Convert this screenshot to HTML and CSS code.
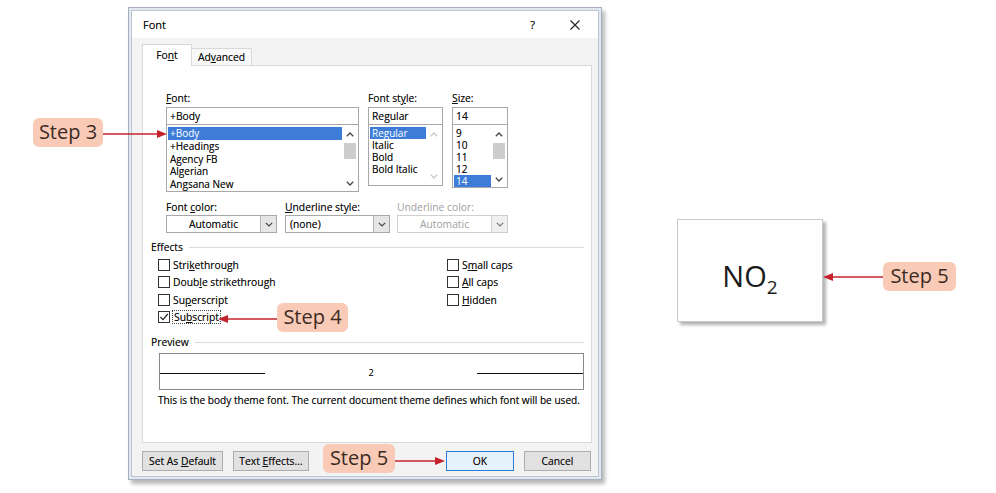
FILE: index.html
```html
<!DOCTYPE html>
<html>
<head>
<meta charset="utf-8">
<title>Font</title>
<link rel="stylesheet" href="styles.css">
</head>
<body>
<div class="stage">
  <div class="dialog">
    <div class="dinner">
      <div class="titlebar">
        <span class="title">Font</span>
        <span class="help">?</span>
        <svg class="close" width="10" height="10" viewBox="0 0 10 10"><path d="M0.5 0.5 L9.5 9.5 M9.5 0.5 L0.5 9.5" stroke="#222" stroke-width="1.1" fill="none"/></svg>
      </div>
      <div class="dbody">
        <div class="tabs">
          <div class="tab active">Fo<u>n</u>t</div>
          <div class="tab">Ad<u>v</u>anced</div>
        </div>
        <div class="panel">
          <div class="fontrow">
            <div class="col col-font">
              <div class="lbl"><u>F</u>ont:</div>
              <div class="input">+Body</div>
              <div class="list list-font">
                <div class="items">
                  <div class="item sel">+Body</div>
                  <div class="item">+Headings</div>
                  <div class="item">Agency FB</div>
                  <div class="item">Algerian</div>
                  <div class="item">Angsana New</div>
                </div>
                <div class="sbar">
                  <div class="sb-btn up"><svg width="8" height="5" viewBox="0 0 8 5"><polyline points="0.8,4.2 4,1 7.2,4.2" fill="none" stroke="#444" stroke-width="1.3"/></svg></div>
                  <div class="thumb"></div>
                  <div class="sb-space"></div>
                  <div class="sb-btn down"><svg width="8" height="5" viewBox="0 0 8 5"><polyline points="0.8,0.8 4,4 7.2,0.8" fill="none" stroke="#444" stroke-width="1.3"/></svg></div>
                </div>
              </div>
            </div>
            <div class="col col-style">
              <div class="lbl">Font st<u>y</u>le:</div>
              <div class="input">Regular</div>
              <div class="list list-style">
                <div class="items">
                  <div class="item sel">Regular</div>
                  <div class="item">Italic</div>
                  <div class="item">Bold</div>
                  <div class="item">Bold Italic</div>
                </div>
                <div class="sbar disabled">
                  <div class="sb-btn up"><svg width="8" height="5" viewBox="0 0 8 5"><polyline points="0.8,4.2 4,1 7.2,4.2" fill="none" stroke="#c8c8c8" stroke-width="1.3"/></svg></div>
                  <div class="sb-space"></div>
                  <div class="sb-btn down"><svg width="8" height="5" viewBox="0 0 8 5"><polyline points="0.8,0.8 4,4 7.2,0.8" fill="none" stroke="#c8c8c8" stroke-width="1.3"/></svg></div>
                </div>
              </div>
            </div>
            <div class="col col-size">
              <div class="lbl"><u>S</u>ize:</div>
              <div class="input">14</div>
              <div class="list list-size">
                <div class="items">
                  <div class="item">9</div>
                  <div class="item">10</div>
                  <div class="item">11</div>
                  <div class="item">12</div>
                  <div class="item sel">14</div>
                </div>
                <div class="sbar">
                  <div class="sb-btn up"><svg width="8" height="5" viewBox="0 0 8 5"><polyline points="0.8,4.2 4,1 7.2,4.2" fill="none" stroke="#444" stroke-width="1.3"/></svg></div>
                  <div class="thumb"></div>
                  <div class="sb-space"></div>
                  <div class="sb-btn down"><svg width="8" height="5" viewBox="0 0 8 5"><polyline points="0.8,0.8 4,4 7.2,0.8" fill="none" stroke="#444" stroke-width="1.3"/></svg></div>
                </div>
              </div>
            </div>
          </div>

          <div class="colorrow">
            <div class="ccol c1">
              <div class="lbl">Font <u>c</u>olor:</div>
              <div class="select"><span class="sval center">Automatic</span><span class="sbtn"><svg width="8" height="5" viewBox="0 0 8 5"><polyline points="0.8,0.8 4,4 7.2,0.8" fill="none" stroke="#444" stroke-width="1.2"/></svg></span></div>
            </div>
            <div class="ccol c2">
              <div class="lbl"><u>U</u>nderline style:</div>
              <div class="select"><span class="sval">(none)</span><span class="sbtn"><svg width="8" height="5" viewBox="0 0 8 5"><polyline points="0.8,0.8 4,4 7.2,0.8" fill="none" stroke="#444" stroke-width="1.2"/></svg></span></div>
            </div>
            <div class="ccol c3 disabled">
              <div class="lbl">Underline color:</div>
              <div class="select"><span class="sval center">Automatic</span><span class="sbtn"><svg width="8" height="5" viewBox="0 0 8 5"><polyline points="0.8,0.8 4,4 7.2,0.8" fill="none" stroke="#777" stroke-width="1.2"/></svg></span></div>
            </div>
          </div>

          <div class="group-head"><span>Effects</span><span class="rule"></span></div>
          <div class="effects">
            <div class="ecol">
              <div class="chk"><span class="box"></span><span>Stri<u>k</u>ethrough</span></div>
              <div class="chk"><span class="box"></span><span>Doub<u>l</u>e strikethrough</span></div>
              <div class="chk"><span class="box"></span><span>Su<u>p</u>erscript</span></div>
              <div class="chk"><span class="box checked"><svg width="10" height="10" viewBox="0 0 10 10"><polyline points="1.5,5 4,7.6 8.8,2" fill="none" stroke="#222" stroke-width="1.2"/></svg></span><span class="focus">Su<u>b</u>script</span></div>
            </div>
            <div class="ecol">
              <div class="chk"><span class="box"></span><span>S<u>m</u>all caps</span></div>
              <div class="chk"><span class="box"></span><span><u>A</u>ll caps</span></div>
              <div class="chk"><span class="box"></span><span><u>H</u>idden</span></div>
            </div>
          </div>

          <div class="group-head preview-head"><span>Preview</span><span class="rule"></span></div>
          <div class="preview">
            <span class="pline left"></span>
            <span class="ptext">2</span>
            <span class="pline right"></span>
          </div>
          <div class="desc">This is the body theme font. The current document theme defines which font will be used.</div>
        </div>

        <div class="buttons">
          <div class="btn b-default">Set As <u>D</u>efault</div>
          <div class="btn b-effects">Text <u>E</u>ffects...</div>
          <div class="btn b-ok">OK</div>
          <div class="btn b-cancel">Cancel</div>
        </div>
      </div>
    </div>
  </div>

  <div class="result">
    <div class="nobox"><span class="formula">NO<sub>2</sub></span></div>
    <div class="pointer">
      <svg class="arrow" width="60" height="10" viewBox="0 0 60 10"><line x1="8" y1="5" x2="60" y2="5" stroke="#c4232d" stroke-width="1.6"/><polygon points="0,5 10,1 10,9" fill="#c4232d"/></svg>
      <div class="pill">Step 5</div>
    </div>
  </div>

  <div class="callout s3">Step 3</div>
  <svg class="arr a3" width="64" height="10" viewBox="0 0 64 10"><line x1="0" y1="5" x2="56" y2="5" stroke="#c4232d" stroke-width="1.6"/><polygon points="64,5 54,1 54,9" fill="#c4232d"/></svg>

  <div class="callout s4">Step 4</div>
  <svg class="arr a4" width="59" height="10" viewBox="0 0 59 10"><line x1="8" y1="5" x2="59" y2="5" stroke="#c4232d" stroke-width="1.6"/><polygon points="0,5 10,1 10,9" fill="#c4232d"/></svg>

  <div class="callout s5">Step 5</div>
  <svg class="arr a5" width="50" height="10" viewBox="0 0 50 10"><line x1="0" y1="5" x2="42" y2="5" stroke="#c4232d" stroke-width="1.6"/><polygon points="50,5 40,1 40,9" fill="#c4232d"/></svg>
</div>
</body>
</html>
```

FILE: styles.css
```css
* { box-sizing: border-box; }
body {
  margin: 0;
  background: #fff;
  font-family: "Open Sans", "DejaVu Sans", sans-serif;
}
.stage {
  position: relative;
  width: 996px;
  height: 493px;
  display: flex;
  align-items: flex-start;
  overflow: hidden;
}

/* ---------- dialog ---------- */
.dialog {
  margin: 7px 0 0 128px;
  width: 474px;
  height: 473px;
  border: 1px solid #a6afbb;
  padding: 2px;
  background: #e2e8f0;
  box-shadow: 3px 4px 4px rgba(0, 0, 0, 0.28);
  display: flex;
  flex-direction: column;
  font-size: 10.3px;
  color: #111;
  text-shadow: 0 0 0.5px rgba(0, 0, 0, 0.55);
}
.dinner {
  flex: 1;
  border: 1px solid #bcc6d3;
  background: #f3f3f3;
  display: flex;
  flex-direction: column;
}
.titlebar {
  height: 27px;
  background: #fff;
  display: flex;
  align-items: center;
  padding: 0 18px 0 11px;
  font-size: 11px;
}
.title { flex: 1; }
.help { margin-right: 35px; font-size: 11px; }
.close { display: block; }

.dbody {
  flex: 1;
  display: flex;
  flex-direction: column;
  padding: 0 6px 0 10px;
}
.tabs {
  height: 27px;
  display: flex;
  align-items: flex-end;
  position: relative;
  z-index: 1;
}
.tab {
  height: 17px;
  width: 60px;
  border: 1px solid #d9d9d9;
  border-bottom: none;
  border-left: none;
  background: #f8f8f8;
  text-align: center;
  line-height: 16px;
}
.tab.active {
  width: 50px;
  height: 22px;
  border-left: 1px solid #d9d9d9;
  background: #fff;
  margin-bottom: -1px;
  line-height: 20px;
}
.panel {
  height: 378px;
  border: 1px solid #d9d9d9;
  background: #fff;
  padding: 26px 7px 0 8px;
}

.lbl { height: 13px; line-height: 13px; white-space: nowrap; }
.fontrow {
  display: flex;
  margin-left: 15px;
  gap: 9px;
}
.col-font { width: 193px; }
.col-style { width: 75px; }
.col-size { width: 56px; }
.input {
  margin-top: 2px;
  height: 18px;
  border: 1px solid #a8a8a8;
  line-height: 16px;
  padding-left: 3px;
  background: #fff;
}
.list {
  margin-top: -1px;
  border: 1px solid #a8a8a8;
  display: flex;
  background: #fff;
  font-size: 10px;
}
.list-font { height: 68px; }
.list-style { height: 62px; }
.list-size { height: 64px; }
.items { flex: 1; padding-top: 2px; padding-left: 1px; }
.item { height: 12.75px; line-height: 12.75px; padding-left: 2px; white-space: nowrap; }
.list-style .item, .list-size .item { height: 12px; line-height: 12px; }
.item.sel { background: #3d7dd8; color: #fff; text-shadow: none; }
.sbar {
  width: 16px;
  display: flex;
  flex-direction: column;
  padding: 1px 1px;
}
.sb-btn { height: 16px; display: flex; align-items: center; justify-content: center; }
.sb-btn svg { display: block; }
.thumb { height: 16px; background: #cdcdcd; margin: 1px 1px 0; }
.sb-space { flex: 1; }
.list-size .sb-btn.down { height: 13px; }
.list-font .sb-btn.down { height: 14px; }

.colorrow {
  display: flex;
  margin: 9px 0 0 15px;
}
.ccol .select { margin-top: 1px; }
.c1 { width: 111px; margin-right: 8px; }
.c2 { width: 105px; margin-right: 7px; }
.c3 { width: 111px; }
.select {
  height: 18px;
  border: 1px solid #a8a8a8;
  display: flex;
  background: #fff;
}
.sval { flex: 1; line-height: 16px; padding-left: 4px; }
.sval.center { text-align: center; padding-left: 0; }
.sbtn {
  width: 16px;
  background: #e6e6e6;
  border-left: 1px solid #b4b4b4;
  display: flex;
  align-items: center;
  justify-content: center;
}
.disabled .lbl, .disabled .sval { color: #a0a0a0; text-shadow: none; }
.disabled .select { border-color: #cfcfcf; }
.disabled .sbtn { background: #efefef; border-left-color: #d0d0d0; }

.group-head {
  display: flex;
  align-items: center;
  margin-top: 8px;
  height: 13px;
  line-height: 13px;
}
.group-head .rule {
  flex: 1;
  height: 1px;
  background: #dcdcdc;
  margin-left: 6px;
}
.effects {
  display: grid;
  grid-template-columns: 289px auto;
  margin: 2px 0 0 7px;
}
.chk {
  height: 17.5px;
  display: flex;
  align-items: center;
  gap: 3px;
  white-space: nowrap;
}
.box {
  width: 12px;
  height: 12px;
  border: 1px solid #333;
  background: #fff;
  display: flex;
  align-items: center;
  justify-content: center;
}
.focus {
  border: 1px dotted #444;
  padding: 0 1px;
  line-height: 12px;
  margin-left: -1px;
}
.preview-head { margin-top: 10px; }
.preview {
  margin: 4px 0 0 8px;
  height: 37px;
  border: 1px solid #8a8a8a;
  display: flex;
  align-items: center;
  padding-top: 4px;
}
.pline { height: 1.5px; background: #111; }
.pline.left { width: 105px; }
.pline.right { width: 106px; }
.ptext { flex: 1; text-align: center; font-size: 9px; margin-top: -2px; }
.desc {
  margin: 4px 0 0 7px;
  line-height: 13px;
  font-size: 10.1px;
  white-space: nowrap;
}

.buttons {
  display: flex;
  margin-top: 8px;
  height: 20px;
}
.btn {
  height: 20px;
  border: 1px solid #adadad;
  background: #e1e1e1;
  text-align: center;
  line-height: 18px;
}
.b-default { width: 81px; margin-right: 10px; }
.b-effects { width: 76px; }
.b-ok {
  width: 68px;
  margin-left: auto;
  margin-right: 10px;
  border-color: #2a7fd4;
  background: #e5f1fb;
}
.b-cancel { width: 67px; margin-right: 1px; }

/* ---------- result ---------- */
.result {
  display: flex;
  align-items: flex-start;
  margin: 219px 0 0 75px;
}
.nobox {
  width: 146px;
  height: 103px;
  border: 1px solid #c9c9c9;
  background: #fff;
  box-shadow: 3px 3px 3px rgba(0, 0, 0, 0.3);
  display: flex;
  align-items: center;
  justify-content: center;
  padding-top: 10px;
  font-size: 29px;
  color: #1a1a1a;
}
.formula sub { font-size: 19px; vertical-align: -7px; line-height: 0; }
.pointer {
  display: flex;
  align-items: center;
  margin-top: 43px;
}
.arrow { display: block; }

/* ---------- callouts ---------- */
.pill, .callout {
  height: 29px;
  line-height: 28px;
  background: #f9cbb6;
  border-radius: 6px;
  font-size: 20px;
  color: #3b2a24;
  text-align: center;
  white-space: nowrap;
}
.pill { width: 73px; }
.callout { position: absolute; }
.s3 { left: 33px; top: 118px; width: 70px; }
.s4 { left: 277px; top: 303px; width: 71px; }
.s5 { left: 323px; top: 444px; width: 72px; }
.arr { position: absolute; display: block; }
.a3 { left: 103px; top: 129px; }
.a4 { left: 218px; top: 314px; }
.a5 { left: 395px; top: 456px; }
```
